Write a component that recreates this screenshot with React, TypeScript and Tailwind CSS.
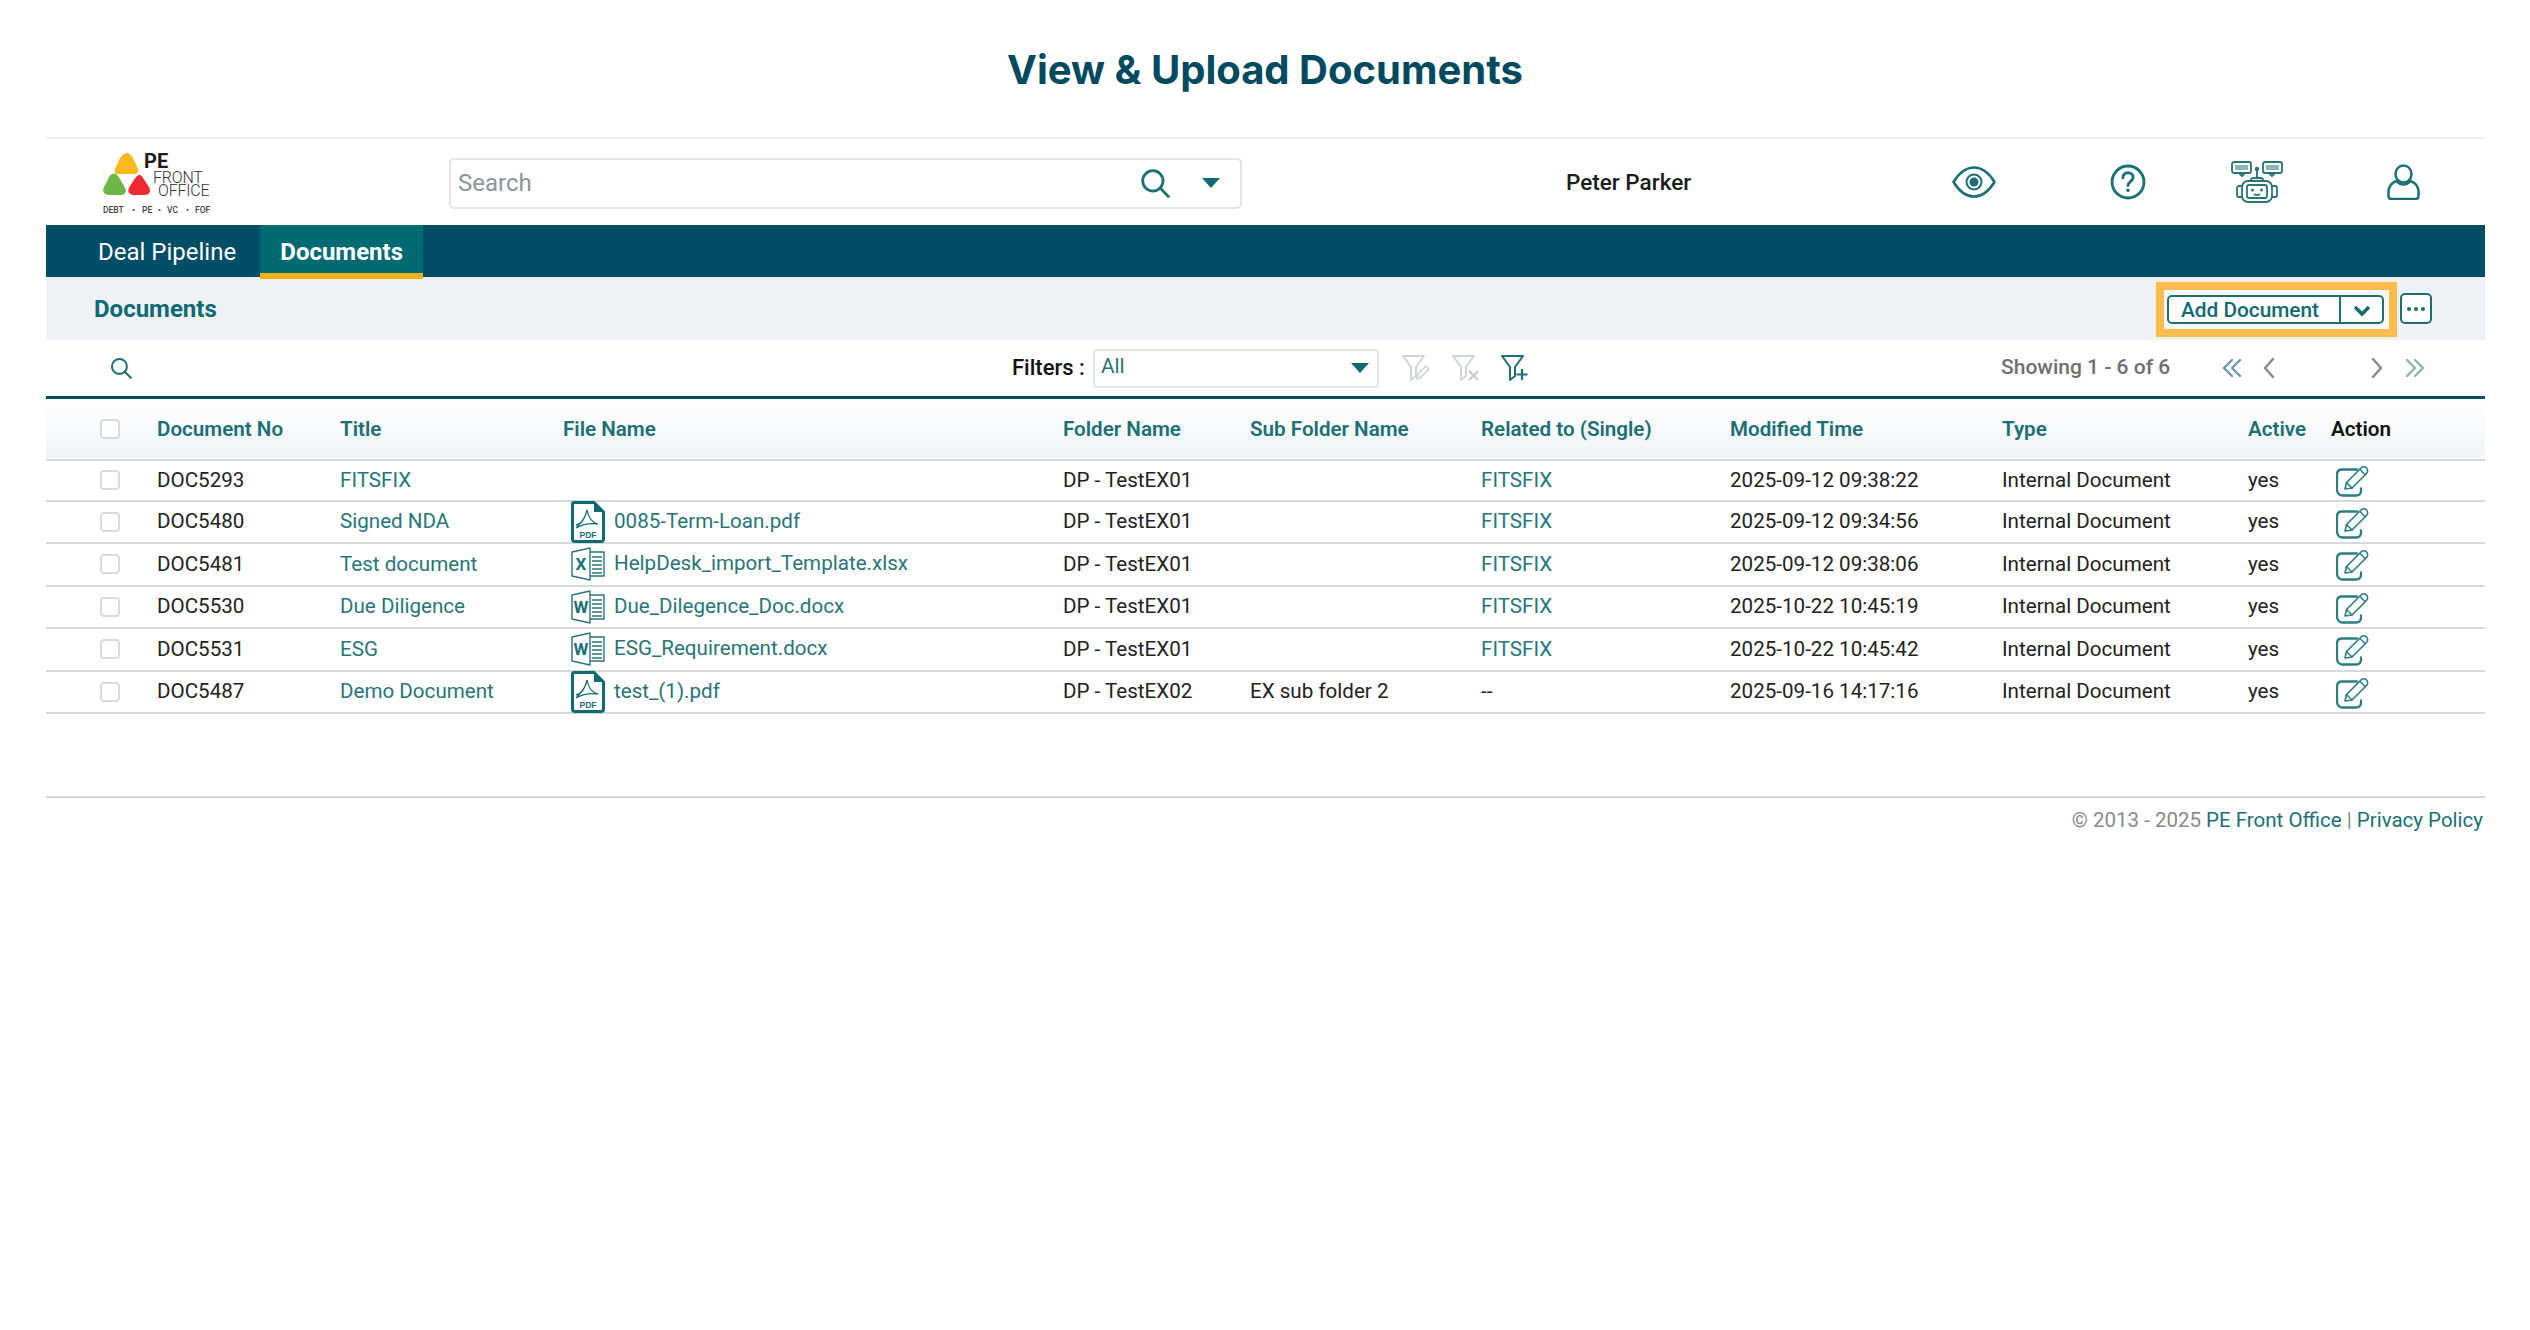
const TEAL = '#26767b'

interface DocRow {
  no: string
  title: string
  file?: string
  kind?: 'pdf' | 'xls' | 'doc'
  folder: string
  sub?: string
  related: string
  modified: string
  h: string
}

const rows: DocRow[] = [
  { no: 'DOC5293', title: 'FITSFIX', folder: 'DP - TestEX01', related: 'FITSFIX', modified: '2025-09-12 09:38:22', h: 'h-[41px]' },
  { no: 'DOC5480', title: 'Signed NDA', file: '0085-Term-Loan.pdf', kind: 'pdf', folder: 'DP - TestEX01', related: 'FITSFIX', modified: '2025-09-12 09:34:56', h: 'h-[42px]' },
  { no: 'DOC5481', title: 'Test document', file: 'HelpDesk_import_Template.xlsx', kind: 'xls', folder: 'DP - TestEX01', related: 'FITSFIX', modified: '2025-09-12 09:38:06', h: 'h-[43px]' },
  { no: 'DOC5530', title: 'Due Diligence', file: 'Due_Dilegence_Doc.docx', kind: 'doc', folder: 'DP - TestEX01', related: 'FITSFIX', modified: '2025-10-22 10:45:19', h: 'h-[42px]' },
  { no: 'DOC5531', title: 'ESG', file: 'ESG_Requirement.docx', kind: 'doc', folder: 'DP - TestEX01', related: 'FITSFIX', modified: '2025-10-22 10:45:42', h: 'h-[43px]' },
  { no: 'DOC5487', title: 'Demo Document', file: 'test_(1).pdf', kind: 'pdf', folder: 'DP - TestEX02', sub: 'EX sub folder 2', related: '--', modified: '2025-09-16 14:17:16', h: 'h-[42px]' },
]

const columns = [
  { w: 'w-[183px]', label: 'Document No' },
  { w: 'w-[223px]', label: 'Title' },
  { w: 'w-[500px]', label: 'File Name' },
  { w: 'w-[187px]', label: 'Folder Name' },
  { w: 'w-[231px]', label: 'Sub Folder Name' },
  { w: 'w-[249px]', label: 'Related to (Single)' },
  { w: 'w-[272px]', label: 'Modified Time' },
  { w: 'w-[246px]', label: 'Type' },
  { w: 'w-[83px]', label: 'Active' },
]

const Logo = () => (
  <svg width="110" height="68" viewBox="0 -5 110 68" className="shrink-0">
    <path d="M24 0c3 0 5 3 7 7l4 9c1 3-1 5-3 5H15c-3 0-4-2-3-5l4-9c2-4 5-7 8-7z" fill="#fbb81f" />
    <path d="M10 21c2-1 3 0 5 2l7 11c2 3 1 8-4 8H6c-5 0-7-4-5-8l5-10c1-2 2-3 4-3z" fill="#6eb646" />
    <path d="M36 22c2 0 3 1 4 3l6 9c2 4 1 8-4 8H31c-5 0-7-4-5-8l7-10c1-1 2-2 3-2z" fill="#ed2a36" />
    <path d="M16 23h16l-8 16z" fill="#fff" />
    <text x="41" y="15" fontFamily="Roboto, sans-serif" fontWeight="700" fontSize="20" fill="#1b1b1b">PE</text>
    <text x="50" y="30" fontFamily="Roboto, sans-serif" fontWeight="300" fontSize="16" letterSpacing="-0.200" fill="#333">FRONT</text>
    <text x="55" y="43" fontFamily="Roboto, sans-serif" fontWeight="300" fontSize="16" letterSpacing="-0.200" fill="#333">OFFICE</text>
    <g fontFamily="Roboto, sans-serif" fontWeight="500" fontSize="8.500" fill="#444">
      <text x="0" y="60">DEBT</text>
      <text x="29" y="60">•</text>
      <text x="39" y="60">PE</text>
      <text x="55" y="60">•</text>
      <text x="64" y="60">VC</text>
      <text x="83" y="60">•</text>
      <text x="92" y="60">FOF</text>
    </g>
  </svg>
)

const SearchIcon = ({ size }: { size: number }) => (
  <svg width={size} height={size} viewBox="0 0 28 28" fill="none" stroke="#1c7075" strokeWidth="2.600" strokeLinecap="round">
    <circle cx="12" cy="12" r="9.500" />
    <path d="M19 19l7.500 7.500" />
  </svg>
)

const Caret = () => (
  <svg width="18" height="10" viewBox="0 0 18 10"><path d="M0 0h18l-9 10z" fill="#0f6a72" /></svg>
)

const EyeIcon = () => (
  <svg width="44" height="32" viewBox="0 0 44 32" fill="none" stroke="#1c7075" strokeWidth="2.600">
    <path d="M1.500 16C7 7 14 1.500 22 1.500S37 7 42.500 16C37 25 30 30.500 22 30.500S7 25 1.500 16z" strokeLinejoin="round" />
    <circle cx="22" cy="16" r="7.500" strokeWidth="2" />
    <circle cx="22" cy="16" r="4.500" fill="#1c7075" stroke="none" />
  </svg>
)

const HelpIcon = () => (
  <svg width="36" height="36" viewBox="0 0 35 35" fill="none" stroke="#1c7075" strokeWidth="2.800" strokeLinecap="round">
    <circle cx="17.500" cy="17.500" r="15.500" />
    <path d="M12.500 13.500c0-3 2.200-5 5-5s5 2 5 4.600c0 3.700-5 3.900-5 7.900" />
    <circle cx="17.500" cy="25.500" r="1.700" fill="#1c7075" stroke="none" />
  </svg>
)

const RobotIcon = () => (
  <svg width="52" height="42" viewBox="0 0 52 42" fill="none" stroke="#2a7478" strokeWidth="1.800" strokeLinejoin="round">
    <rect x="1" y="1" width="19" height="11" rx="2" />
    <rect x="4" y="4" width="13" height="5" fill="#8fb5b8" stroke="none" />
    <path d="M8 12l3 3 3-3" />
    <rect x="32" y="1" width="19" height="11" rx="2" />
    <rect x="35" y="4" width="13" height="5" fill="#8fb5b8" stroke="none" />
    <path d="M38 12l3 3 3-3" />
    <path d="M26 8v9" />
    <circle cx="26" cy="8" r="1.300" fill="#2a7478" />
    <path d="M20 20v-1c0-1 1-2 3-2h6c2 0 3 1 3 2v1" />
    <rect x="11" y="20" width="30" height="21" rx="6" />
    <rect x="16" y="24" width="20" height="13" rx="2" />
    <circle cx="21.500" cy="29" r="1.500" fill="#2a7478" stroke="none" />
    <circle cx="30.500" cy="29" r="1.500" fill="#2a7478" stroke="none" />
    <path d="M23 33c2 1.500 4 1.500 6 0" />
    <path d="M11 25H8c-1 0-2 1-2 2v7c0 1 1 2 2 2h3M41 25h3c1 0 2 1 2 2v7c0 1-1 2-2 2h-3" />
  </svg>
)

const UserIcon = () => (
  <svg width="33" height="36" viewBox="0 0 33 36" fill="none" stroke="#1c7075" strokeWidth="2.500" strokeLinejoin="round">
    <ellipse cx="16.500" cy="10" rx="8" ry="8.500" />
    <path d="M9.500 17C4 19 1.500 23 1.500 28v4c0 2 1 3 3 3h24c2 0 3-1 3-3v-4c0-5-2.500-9-8-11-2 2.500-4.200 3.500-7 3.500s-5-1-7-3.500z" />
  </svg>
)

const FunnelPath = ({ color }: { color: string }) => (
  <path d="M2 2h21l-8 11v9l-5 4V13z" fill="none" stroke={color} strokeWidth="2" strokeLinejoin="round" />
)

const FilterEditIcon = () => (
  <svg width="30" height="28" viewBox="0 0 30 28">
    <FunnelPath color="#cfd6d8" />
    <path d="M16 25l1-5 8-8 3 3-8 8z" fill="none" stroke="#cfd6d8" strokeWidth="1.600" />
  </svg>
)

const FilterClearIcon = () => (
  <svg width="30" height="28" viewBox="0 0 30 28">
    <FunnelPath color="#cfd6d8" />
    <path d="M18 17l9 9M27 17l-9 9" stroke="#c4cccf" strokeWidth="2.200" />
  </svg>
)

const FilterAddIcon = () => (
  <svg width="30" height="28" viewBox="0 0 30 28">
    <FunnelPath color="#1c7075" />
    <path d="M22 15v11M16.500 20.500h11" stroke="#1c7075" strokeWidth="2.200" />
  </svg>
)

const Chevron = ({ d, color = '#7f8c96' }: { d: string; color?: string }) => (
  <svg width="24" height="24" viewBox="0 0 24 24" fill="none" stroke={color} strokeWidth="2.400" strokeLinecap="round" strokeLinejoin="round">
    <path d={d} />
  </svg>
)

const PdfIcon = () => (
  <svg width="34" height="42" viewBox="0 0 34 42" className="shrink-0">
    <path d="M3 1.500h20L32.500 11v27c0 1.500-1 2.500-2.500 2.500H4c-1.500 0-2.500-1-2.500-2.500V3c0-1 .5-1.500 1.500-1.500z" fill="#fff" stroke="#0f6a72" strokeWidth="3" />
    <path d="M23 1.500V11h9.500z" fill="#0f6a72" />
    <path d="M5 24c5-1 9-6 11-15 1 6 4 12 11 14-8-1-15 0-22 4 3-3 7-7 9-12" fill="none" stroke="#1c7075" strokeWidth="1.300" />
    <text x="17" y="37" textAnchor="middle" fontFamily="Liberation Sans, sans-serif" fontWeight="700" fontSize="8.500" fill="#1c7075">PDF</text>
  </svg>
)

const SheetIcon = ({ letter }: { letter: string }) => (
  <svg width="34" height="34" viewBox="0 0 34 34" className="shrink-0">
    <path d="M1 5l18-4v32L1 29z" fill="#fff" stroke="#2a7478" strokeWidth="1.400" strokeLinejoin="round" />
    <path d="M19 5h14v24H19" fill="none" stroke="#2a7478" strokeWidth="1.400" />
    <path d="M21 10h10M21 14h10M21 18h10M21 22h10M21 26h10" stroke="#2a7478" strokeWidth="1.300" />
    <text x="10" y="23" textAnchor="middle" fontFamily="Roboto, sans-serif" fontWeight="700" fontSize="17" fill="#1c7075">{letter}</text>
  </svg>
)

const EditIcon = () => (
  <svg width="33" height="31" viewBox="0 0 33 31" fill="none" stroke="#2a7f82" strokeWidth="2" strokeLinejoin="round" strokeLinecap="round">
    <path d="M21 3.500H6c-3 0-5 2-5 5v15c0 3 2 6 5 6h14c3 0 5-2 5-5v-2" strokeWidth="2.300" />
    <path d="M9 23l1.500-6.500L25 2c1.500-1.500 4-1.500 5.500 0s1.500 4 0 5.500L16 22z" strokeWidth="1.600" />
    <path d="M24 3.500L29 8.500M10.500 16.500L16 22" strokeWidth="1.500" />
  </svg>
)

const FileIcon = ({ kind }: { kind: DocRow['kind'] }) => {
  if (kind === 'pdf') return <PdfIcon />
  if (kind === 'xls') return <SheetIcon letter="X" />
  return <SheetIcon letter="W" />
}

const Check = () => <span className="block w-5 h-5 rounded-[4px] border-2 border-[#d9dcde] bg-white" />

export default function App() {
  return (
    <div className="min-h-[1330px] bg-white font-[Roboto,sans-serif] text-[20.600px] text-[#222]">
      <h1 className="h-[137px] pt-[2px] flex items-center justify-center font-[Inter,sans-serif] font-bold text-[40px] text-[#004a60]">
        View &amp; Upload Documents
      </h1>

      <div className="ml-[46px] w-[2439px]">
        <header className="h-[88px] border-t-2 border-[#eceeef] flex items-center">
          <div className="ml-[57px] w-[110px] shrink-0 flex">
            <Logo />
          </div>
          <div className="ml-[236px] mt-[2px] w-[793px] h-[51px] border-2 border-[#e3e6e8] rounded-[5px] flex items-center shrink-0">
            <span className="ml-[7px] text-[24px] text-[#8a959c]">Search</span>
            <span className="ml-auto flex items-center">
              <SearchIcon size={30} />
              <span className="ml-[32px] mr-[20px] flex"><Caret /></span>
            </span>
          </div>
          <span className="ml-[324px] mt-[2px] w-[126px] whitespace-nowrap text-[22.500px] font-medium text-[#1b1b1b] shrink-0">Peter Parker</span>
          <span className="ml-[260px] flex"><EyeIcon /></span>
          <span className="ml-[114px] flex"><HelpIcon /></span>
          <span className="ml-[85px] flex"><RobotIcon /></span>
          <span className="ml-[104px] flex"><UserIcon /></span>
        </header>

        <nav className="h-[52px] bg-[#004e66] flex items-start">
          <span className="ml-[52px] h-[52px] pt-[2px] flex items-center text-[24px] text-white">Deal Pipeline</span>
          <span className="ml-[24px] w-[163px] h-[54px] flex items-center justify-center border-b-[6px] border-[#f5b01c] bg-[#006a73] text-[24px] font-bold text-white pt-[5px]">
            Documents
          </span>
        </nav>

        <div className="h-[63px] bg-[#eef2f6] flex items-center">
          <span className="ml-[48px] text-[24px] font-bold text-[#0f6a72]">Documents</span>
          <div className="ml-auto mr-[53px] flex items-center gap-[3px]">
            <div className="w-[241px] h-[55px] mt-[2px] border-[8px] border-[#fdbb50] bg-[#f6f8fa] flex items-center pl-[3px]">
              <div className="w-[217px] h-[29px] bg-white border-2 border-[#1c7075] rounded-[5px] flex items-center">
                <span className="w-[170px] pl-[12px] pt-[2px] text-left whitespace-nowrap text-[20.800px] font-medium text-[#0f6a72]">Add Document</span>
                <span className="flex-1 h-full pt-[2px] border-l-2 border-[#1c7075] flex items-center justify-center">
                  <svg width="18" height="12" viewBox="0 0 18 12" fill="none" stroke="#0f6a72" strokeWidth="3.500">
                    <path d="M2 2l7 7 7-7" />
                  </svg>
                </span>
              </div>
            </div>
            <div className="w-[32px] h-[31px] border-2 border-[#1c7075] rounded-[5px] bg-white flex items-center justify-center gap-[3px]">
              <span className="w-[4px] h-[4px] rounded-full bg-[#0f6a72]" />
              <span className="w-[4px] h-[4px] rounded-full bg-[#0f6a72]" />
              <span className="w-[4px] h-[4px] rounded-full bg-[#0f6a72]" />
            </div>
          </div>
        </div>

        <div className="h-[59px] border-b-[3px] border-[#00506a] flex items-center">
          <span className="ml-[64px] flex"><SearchIcon size={22} /></span>
          <span className="ml-[880px] w-[81px] -mt-[2px] whitespace-nowrap text-[22px] font-medium text-[#111]">Filters :</span>
          <div className="w-[286px] h-[39px] border-2 border-[#e3e6e8] rounded-[4px] flex items-center justify-between pl-[6px] pr-[8px]">
            <span className="-mt-[2px] text-[20.800px] text-[#2a7478]">All</span>
            <Caret />
          </div>
          <span className="ml-[22px] flex"><FilterEditIcon /></span>
          <span className="ml-[20px] flex"><FilterClearIcon /></span>
          <span className="ml-[19px] flex"><FilterAddIcon /></span>
          <span className="ml-[471px] w-[167px] whitespace-nowrap text-[21px] font-medium text-[#6f6f6f]">Showing 1 - 6 of 6</span>
          <span className="ml-[52px] flex"><Chevron d="M12 4l-8 8 8 8M20 4l-8 8 8 8" color="#6a9aa8" /></span>
          <span className="ml-[13px] flex"><Chevron d="M16 3l-8 9 8 9" /></span>
          <span className="ml-[84px] flex"><Chevron d="M8 3l8 9-8 9" /></span>
          <span className="ml-[14px] flex"><Chevron d="M4 4l8 8-8 8M12 4l8 8-8 8" color="#8fb0bc" /></span>
        </div>

        <table className="w-[2439px] table-fixed border-collapse">
          <colgroup>
            <col className="w-[111px]" />
            {columns.map((c) => (
              <col key={c.label} className={c.w} />
            ))}
            <col />
          </colgroup>
          <thead>
            <tr className="h-[61px] bg-gradient-to-b from-white to-[#eff4f7] border-b-2 border-[#d3d9dc]">
              <th className="pl-[54px]"><Check /></th>
              {columns.map((c) => (
                <th key={c.label} className="p-0 text-left font-semibold whitespace-nowrap text-[#1c7075]">{c.label}</th>
              ))}
              <th className="p-0 text-left font-semibold text-[#111]">Action</th>
            </tr>
          </thead>
          <tbody>
            {rows.map((r) => (
              <tr key={r.no} className={`${r.h} border-b-2 border-[#d3d9dc]`}>
                <td className="pl-[54px] pb-[1px]"><Check /></td>
                <td className="p-0 pb-[1px]">{r.no}</td>
                <td className="p-0 pb-[1px]" style={{ color: TEAL }}>{r.title}</td>
                <td className="p-0 pb-[1px]">
                  {r.file && (
                    <div className="flex items-center gap-[9px] pl-[8px] h-[34px]">
                      <FileIcon kind={r.kind} />
                      <span className="text-[#2a7478] -mt-[1px] whitespace-nowrap">{r.file}</span>
                    </div>
                  )}
                </td>
                <td className="p-0 pb-[1px]">{r.folder}</td>
                <td className="p-0 pb-[1px]">{r.sub}</td>
                <td className="p-0 pb-[1px]" style={{ color: r.related === '--' ? '#222' : TEAL }}>{r.related}</td>
                <td className="p-0 pb-[1px]">{r.modified}</td>
                <td className="p-0 pb-[1px]">Internal Document</td>
                <td className="p-0 pb-[1px]">yes</td>
                <td className="p-0 pl-[5px]"><span className="flex pt-[2px]"><EditIcon /></span></td>
              </tr>
            ))}
          </tbody>
        </table>

        <footer className="mt-[82px] border-t-2 border-[#d3d7d9] pt-[7px] pr-[2px] text-right text-[20.500px] text-[#8a8a8a]">
          © 2013 - 2025 <span className="text-[#1c7075]">PE Front Office</span> | <span className="text-[#1c7075]">Privacy Policy</span>
        </footer>
      </div>
    </div>
  )
}
